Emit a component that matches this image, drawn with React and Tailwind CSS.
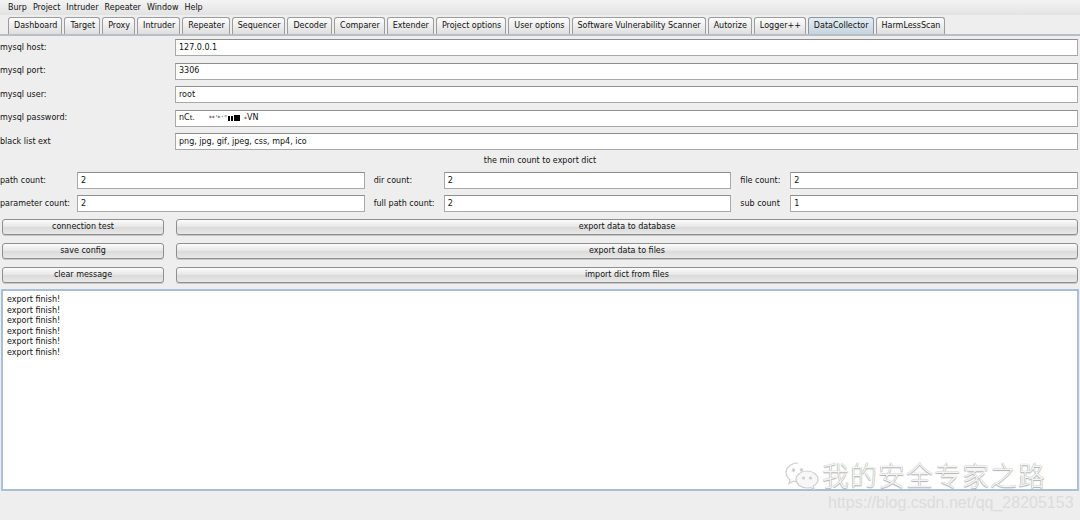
const menus = ['Burp', 'Project', 'Intruder', 'Repeater', 'Window', 'Help'];

const tabs = [
  'Dashboard', 'Target', 'Proxy', 'Intruder', 'Repeater', 'Sequencer', 'Decoder',
  'Comparer', 'Extender', 'Project options', 'User options',
  'Software Vulnerability Scanner', 'Autorize', 'Logger++', 'DataCollector', 'HarmLessScan',
];

const fields = [
  { label: 'mysql host:', value: '127.0.0.1' },
  { label: 'mysql port:', value: '3306' },
  { label: 'mysql user:', value: 'root' },
  { label: 'mysql password:', value: null },
  { label: 'black list ext', value: 'png, jpg, gif, jpeg, css, mp4, ico' },
];

const buttons = [
  ['connection test', 'export data to database'],
  ['save config', 'export data to files'],
  ['clear message', 'import dict from files'],
];

function Field({ children, className = '' }) {
  return (
    <div className={`h-[17px] bg-white border border-[#a9a9a9] border-t-[#8e8e8e] flex items-center pl-[3px] text-[8px] text-[#111] ${className}`}>
      {children}
    </div>
  );
}

function Btn({ children, className = '' }) {
  return (
    <div className={`h-[16px] rounded-[3px] border border-[#8f8f8f] bg-[linear-gradient(#fbfbfb,#e6e6e6_50%,#dadada_51%,#e8e8e8)] flex items-center justify-center text-[8px] text-[#111] shadow-[0_1px_0_#c8c8c8] ${className}`}>
      {children}
    </div>
  );
}

function Password() {
  return (
    <span className="flex items-center">
      nC<span className="text-[7px]">t.</span>
      <span className="ml-[14px] flex items-center gap-[1px] text-[6px] leading-none">
        <span>**</span><span>ʹ*</span><span>ʻ</span><span>ʺ</span>
        <span className="inline-block w-[2px] h-[5px] bg-black" />
        <span className="inline-block w-[2px] h-[5px] bg-black" />
        <span className="inline-block w-[6px] h-[6px] bg-black" />
      </span>
      <span className="ml-[4px] text-[6px]">*</span>VN
    </span>
  );
}

function WeChatIcon() {
  return (
    <svg width="36" height="30" viewBox="0 0 36 30" fill="none" stroke="#cfcfcf" strokeWidth="1.2">
      <path d="M14 3C7 3 2 7.5 2 12.5c0 3 1.6 5.5 4.2 7.2L5 23.5l4.4-2.3c1.4.4 3 .6 4.6.6" />
      <circle cx="9.5" cy="10" r="1.2" fill="#cfcfcf" />
      <circle cx="17.5" cy="10" r="1.2" fill="#cfcfcf" />
      <path d="M23 11c-6 0-11 3.8-11 8.5S17 28 23 28c1.2 0 2.4-.2 3.5-.5l3.8 2-1-3.4C31.6 24.6 34 22.2 34 19.5 34 14.8 29 11 23 11z" fill="#f7f7f7" />
      <circle cx="19.5" cy="18" r="1" fill="#cfcfcf" />
      <circle cx="26.5" cy="18" r="1" fill="#cfcfcf" />
    </svg>
  );
}

export default function App() {
  return (
    <div className="w-[1080px] h-[520px] bg-[#eeeeee] overflow-hidden relative text-[#111]" style={{ fontFamily: '"DejaVu Sans", "Noto Sans CJK SC", sans-serif' }}>
      {/* Menu bar */}
      <div className="h-[15px] bg-[linear-gradient(#f4f4f4,#e2e2e2)] flex items-center gap-[6px] pl-[8px] text-[8px]">
        {menus.map((m) => <span key={m}>{m}</span>)}
      </div>

      {/* Tabs */}
      <div className="h-[21px] flex items-end pl-[8px] gap-[2px] border-b-[2px] border-b-[#b9bec4] bg-[#eeeeee]">
        {tabs.map((t) => {
          const active = t === 'DataCollector';
          return (
            <div
              key={t}
              className={`h-[17px] pl-[5px] pr-[4px] flex items-center text-[8px] rounded-t-[3px] border border-b-0 ${
                active
                  ? 'border-[#8a98a4] bg-[linear-gradient(#e3ecf2,#c6d4de)]'
                  : 'border-[#9c9c9c] bg-[linear-gradient(#fdfdfd,#dedede)]'
              }`}
            >
              {t}
            </div>
          );
        })}
      </div>

      {/* Connection fields */}
      <div className="flex flex-col gap-[6.5px] pt-[3px] pr-[2px]">
        {fields.map((f) => (
          <div key={f.label} className="flex items-center">
            <div className="w-[175px] text-[8px]">{f.label}</div>
            <Field className="flex-1">{f.value ?? <Password />}</Field>
          </div>
        ))}
      </div>

      <div className="h-[22px] flex items-center justify-center text-[8px]">the min count to export dict</div>

      {/* Count fields */}
      <div className="flex flex-col gap-[6px] pr-[2px]">
        {[
          [['path count:', '2'], ['dir count:', '2'], ['file count:', '2']],
          [['parameter count:', '2'], ['full path count:', '2'], ['sub count', '1']],
        ].map((row, i) => (
          <div key={i} className="flex items-center text-[8px]">
            <div className="w-[77px]">{row[0][0]}</div>
            <Field className="flex-1">{row[0][1]}</Field>
            <div className="w-[70px] ml-[9px]">{row[1][0]}</div>
            <Field className="flex-1">{row[1][1]}</Field>
            <div className="w-[50px] ml-[9px]">{row[2][0]}</div>
            <Field className="flex-1">{row[2][1]}</Field>
          </div>
        ))}
      </div>

      {/* Buttons */}
      <div className="flex flex-col gap-[8px] pt-[7px] pl-[2px] pr-[2px]">
        {buttons.map(([a, b]) => (
          <div key={a} className="flex gap-[12px]">
            <Btn className="w-[162px]">{a}</Btn>
            <Btn className="flex-1">{b}</Btn>
          </div>
        ))}
      </div>

      {/* Message area */}
      <div className="mt-[6px] mx-[1px] h-[202px] bg-white border-2 border-[#a9bfd6] px-[4px] pt-[4px] text-[8px] leading-[10.5px]">
        {Array.from({ length: 6 }).map((_, i) => (
          <div key={i}>export finish!</div>
        ))}
      </div>

      {/* Watermarks */}
      <div className="absolute left-[784px] top-[455px] flex items-center gap-[2px]">
        <WeChatIcon />
        <span className="text-[27px] tracking-[1px] text-[#f4f4f4] [text-shadow:0_0_1px_#9a9a9a,0_1px_1px_#b0b0b0]" style={{ fontFamily: '"Noto Sans CJK SC", sans-serif', fontWeight: 300 }}>
          我的安全专家之路
        </span>
      </div>
      <div className="absolute left-[828px] top-[491px] text-[16px] text-[#dcdcdc]" style={{ fontFamily: '"Liberation Sans", Arial, sans-serif' }}>
        https://blog.csdn.net/qq_28205153
      </div>
    </div>
  );
}
